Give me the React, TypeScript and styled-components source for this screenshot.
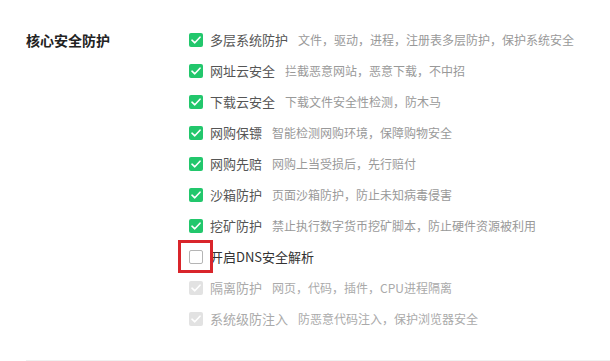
import styled, { createGlobalStyle } from 'styled-components';

const GlobalStyle = createGlobalStyle`
  body {
    margin: 0;
    background: #fff;
    font-family: "Noto Sans CJK SC", "Noto Sans", sans-serif;
  }
`;

const Section = styled.section`
  display: flex;
  margin-left: 26px;
  padding: 24px 0 26px;
  border-bottom: 1px solid #f0f0f0;
`;

const Title = styled.div`
  width: 163px;
  flex-shrink: 0;
  height: 31px;
  display: flex;
  align-items: center;
  font-size: 14px;
  font-weight: 700;
  color: #222;
`;

const List = styled.div`
  display: flex;
  flex-direction: column;
`;

const Row = styled.label`
  display: flex;
  align-items: center;
  height: 31px;
  white-space: nowrap;
`;

type BoxState = 'on' | 'off' | 'disabled';

const Box = styled.span<{ $state: BoxState }>`
  position: relative;
  box-sizing: border-box;
  width: 14px;
  height: 14px;
  border-radius: 2px;
  margin-right: 7px;
  display: flex;
  align-items: center;
  justify-content: center;
  background: ${(p) => (p.$state === 'on' ? '#22c76c' : p.$state === 'disabled' ? '#e2e2e2' : '#fff')};
  border: ${(p) => (p.$state === 'off' ? '1px solid #b5b5b5' : 'none')};
`;

const Highlight = styled.span`
  position: absolute;
  left: -12px;
  top: -11px;
  width: 35px;
  height: 33px;
  box-sizing: border-box;
  border: 3px solid #d9252b;
  pointer-events: none;
`;

const Label = styled.span<{ $state: BoxState }>`
  font-size: 13px;
  color: ${(p) => (p.$state === 'disabled' ? '#aaa' : p.$state === 'off' ? '#333' : '#555')};
`;

const Desc = styled.span<{ $disabled?: boolean }>`
  margin-left: 10px;
  font-size: 12px;
  color: ${(p) => (p.$disabled ? '#aaa' : '#999')};
`;

const Check = () => (
  <svg width="10" height="8" viewBox="0 0 10 8">
    <path d="M1 4.2 L3.8 6.8 L9 1.2" fill="none" stroke="#fff" strokeWidth="1.6" strokeLinecap="round" strokeLinejoin="round" />
  </svg>
);

const items: { label: string; desc?: string; state: BoxState; mark?: boolean }[] = [
  { label: '多层系统防护', desc: '文件，驱动，进程，注册表多层防护，保护系统安全', state: 'on' },
  { label: '网址云安全', desc: '拦截恶意网站，恶意下载，不中招', state: 'on' },
  { label: '下载云安全', desc: '下载文件安全性检测，防木马', state: 'on' },
  { label: '网购保镖', desc: '智能检测网购环境，保障购物安全', state: 'on' },
  { label: '网购先赔', desc: '网购上当受损后，先行赔付', state: 'on' },
  { label: '沙箱防护', desc: '页面沙箱防护，防止未知病毒侵害', state: 'on' },
  { label: '挖矿防护', desc: '禁止执行数字货币挖矿脚本，防止硬件资源被利用', state: 'on' },
  { label: '开启DNS安全解析', state: 'off', mark: true },
  { label: '隔离防护', desc: '网页，代码，插件，CPU进程隔离', state: 'disabled' },
  { label: '系统级防注入', desc: '防恶意代码注入，保护浏览器安全', state: 'disabled' },
];

export default function App() {
  return (
    <>
      <GlobalStyle />
      <Section>
        <Title>核心安全防护</Title>
        <List>
          {items.map((it) => (
            <Row key={it.label}>
              <Box $state={it.state}>
                {it.state !== 'off' && <Check />}
                {it.mark && <Highlight />}
              </Box>
              <Label $state={it.state}>{it.label}</Label>
              {it.desc && <Desc $disabled={it.state === 'disabled'}>{it.desc}</Desc>}
            </Row>
          ))}
        </List>
      </Section>
    </>
  );
}
